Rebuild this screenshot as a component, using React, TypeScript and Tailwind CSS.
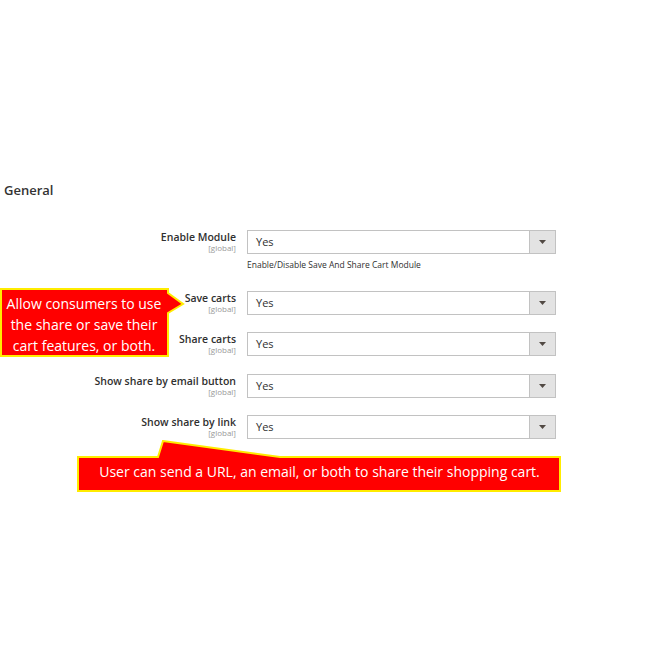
import React from 'react';

type Row = { label: string; gap: string; note?: string };

const rows: Row[] = [
  { label: 'Enable Module', gap: 'mt-0', note: 'Enable/Disable Save And Share Cart Module' },
  { label: 'Save carts', gap: 'mt-[21px]' },
  { label: 'Share carts', gap: 'mt-[17px]' },
  { label: 'Show share by email button', gap: 'mt-[18px]' },
  { label: 'Show share by link', gap: 'mt-[17px]' },
];

function SelectBox() {
  return (
    <div className="flex h-[24px] border border-[#c2c2c2] bg-white">
      <div className="flex flex-1 items-center pl-[8px] text-[11px] text-[#303030]">Yes</div>
      <div className="flex w-[26px] items-center justify-center border-l border-[#c2c2c2] bg-[#e3e3e3]">
        <svg width="7" height="4" viewBox="0 0 7 4">
          <polygon points="0,0 7,0 3.5,4" fill="#514943" />
        </svg>
      </div>
    </div>
  );
}

export default function App() {
  return (
    <div className="relative h-[670px] w-[670px] overflow-hidden bg-white font-['Open_Sans',sans-serif]">
      <div className="pl-[4px] pt-[180px]">
        <h2 className="text-[13px] font-semibold leading-[20px] text-[#333]">General</h2>
      </div>

      <div className="mt-[30px] flex flex-col">
        {rows.map((r) => (
          <div key={r.label} className={`grid grid-cols-[236px_309px] gap-x-[11px] ${r.gap}`}>
            <div className="pt-[1px] text-right">
              <div className="text-[10.5px] font-semibold leading-[12px] text-[#303030]">{r.label}</div>
              <div className="text-[8px] leading-[10px] text-[#999]">[global]</div>
            </div>
            <div>
              <SelectBox />
              {r.note && (
                <div className="mt-[5px] text-[8.5px] leading-[11px] text-[#303030]">{r.note}</div>
              )}
            </div>
          </div>
        ))}
      </div>

      {/* callout: save / share */}
      <div className="absolute left-0 top-[288px] h-[70px] w-[186px]">
        <svg className="absolute inset-0" width="186" height="70" viewBox="0 0 186 70">
          <polygon
            points="1,1 168,1 168,5 183,16 168,25 168,68 1,68"
            fill="#ff0000"
            stroke="#ffec00"
            strokeWidth="2"
          />
        </svg>
        <div className="relative w-[168px] pt-[5px] text-center text-[14px] leading-[21px] text-white">
          Allow consumers to use
          <br />
          the share or save their
          <br />
          cart features, or both.
        </div>
      </div>

      {/* callout: url / email */}
      <div className="absolute left-[77px] top-[440px] h-[53px] w-[485px]">
        <svg className="absolute inset-0" width="485" height="53" viewBox="0 0 485 53">
          <polygon
            points="1,17 81,17 86,1 203,17 483,17 483,51 1,51"
            fill="#ff0000"
            stroke="#ffec00"
            strokeWidth="2"
          />
        </svg>
        <div className="relative flex h-[53px] items-center justify-center pt-[10px] text-[14px] leading-[20px] text-white">
          User can send a URL, an email, or both to share their shopping cart.
        </div>
      </div>
    </div>
  );
}
